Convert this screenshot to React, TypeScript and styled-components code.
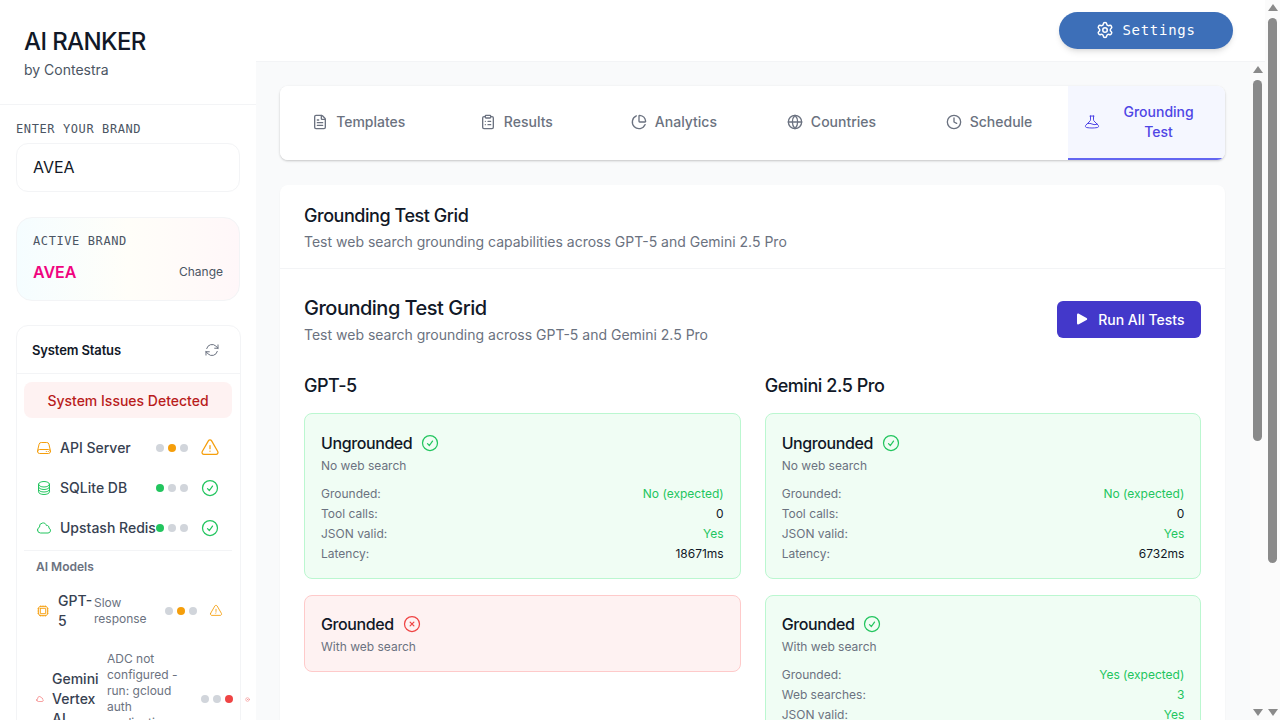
import React from "react";
import styled, { createGlobalStyle } from "styled-components";
import { ChartPie, ClipboardList, Clock, FileText, Globe, Settings } from "lucide-react";
import {
  HiOutlineArrowPath,
  HiOutlineBeaker,
  HiOutlineCheckCircle,
  HiOutlineCircleStack,
  HiOutlineCloud,
  HiOutlineCpuChip,
  HiOutlineExclamationTriangle,
  HiOutlineServer,
  HiOutlineXCircle,
  HiPlay,
} from "react-icons/hi2";

const GlobalStyle = createGlobalStyle`
  html, body {
    margin: 0;
    height: 100%;
    overflow: hidden;
    background: #fff;
    font-family: Inter, "Noto Sans", sans-serif;
    color: #111827;
  }
  * { box-sizing: border-box; }
`;

const mono = `"DejaVu Sans Mono", "Liberation Mono", monospace`;

const Shell = styled.div`
  display: flex;
  height: 720px;
  overflow: hidden;
`;

const Frame = styled.div`
  flex: 1;
  min-width: 0;
  display: flex;
`;

const Sidebar = styled.aside`
  width: 256px;
  flex-shrink: 0;
  overflow: hidden;
  background: #fff;
`;

const Brand = styled.div`
  height: 105px;
  padding: 26px 24px 0;
  border-bottom: 1px solid #f3f4f6;
`;

const Logo = styled.h1`
  margin: 0;
  font-size: 24px;
  line-height: 32px;
  font-weight: 500;
  letter-spacing: -0.025em;
  color: #111827;
`;

const ByLine = styled.p`
  margin: 0;
  font-size: 14px;
  line-height: 24px;
  color: #4b5563;
`;

const SideBody = styled.div`
  padding: 16px 16px 0;
`;

const MonoLabel = styled.label`
  display: block;
  font-family: ${mono};
  font-size: 12px;
  line-height: 16px;
  letter-spacing: 0.05em;
  color: #4b5563;
`;

const BrandInput = styled.div`
  margin-top: 6px;
  height: 49px;
  padding: 0 16px 1px;
  display: flex;
  align-items: center;
  font-size: 16px;
  color: #111827;
  background: #fff;
  border: 1px solid #f3f4f6;
  border-radius: 12px;
`;

const ActiveCard = styled.div`
  margin-top: 25px;
  height: 84px;
  padding: 15px 16px 0;
  border: 1px solid #f3f4f6;
  border-radius: 16px;
  background: linear-gradient(90deg, #f5fdff 0%, #fffef9 50%, #fff7f9 100%);
`;

const ActiveRow = styled.div`
  margin-top: 11px;
  display: flex;
  align-items: center;
  justify-content: space-between;
`;

const ActiveName = styled.span`
  font-size: 16px;
  line-height: 24px;
  font-weight: 600;
  color: #f0047f;
`;

const ChangeLink = styled.span`
  margin-bottom: 2px;
  font-size: 12px;
  color: #4b5563;
`;

const StatusCard = styled.section`
  margin-top: 24px;
  width: 225px;
  background: #fff;
  border: 1px solid #f3f4f6;
  border-radius: 12px;
`;

const StatusHead = styled.div`
  height: 48px;
  padding: 0 20px 0 15px;
  display: flex;
  align-items: center;
  justify-content: space-between;
  border-bottom: 1px solid #f3f4f6;
  font-size: 13px;
  font-weight: 600;
  letter-spacing: -0.01em;
  color: #111827;
  svg {
    width: 16px;
    height: 16px;
    color: #6b7280;
  }
`;

const StatusBody = styled.div`
  padding: 8px 8px 0 7px;
`;

const Alert = styled.div`
  height: 36px;
  display: flex;
  align-items: center;
  justify-content: center;
  border-radius: 8px;
  background: #fef2f2;
  color: #b91c1c;
  font-size: 14px;
  font-weight: 500;
`;

const Services = styled.div`
  margin-top: 10px;
  padding-bottom: 2px;
  border-bottom: 1px solid #f3f4f6;
`;

const ServiceRow = styled.div`
  height: 40px;
  padding: 0 12px;
  display: flex;
  align-items: center;
  justify-content: space-between;
`;

const RowLeft = styled.div<{ $width?: number }>`
  display: flex;
  align-items: center;
  gap: 8px;
  min-width: 0;
  flex-shrink: 0;
  ${(p) => (p.$width ? `width: ${p.$width}px;` : "")}
  font-size: 14px;
  line-height: 20px;
  font-weight: 500;
  color: #374151;
`;

const RowRight = styled.div`
  display: flex;
  align-items: center;
  gap: 12px;
  flex-shrink: 0;
`;

const Lights = styled.div`
  display: flex;
  gap: 4px;
`;

const Light = styled.span<{ $color?: string }>`
  width: 8px;
  height: 8px;
  border-radius: 50%;
  background: ${(p) => p.$color ?? "#d1d5db"};
`;

const Tone = styled.span<{ $color: string; $size: number }>`
  display: flex;
  flex-shrink: 0;
  color: ${(p) => p.$color};
  svg {
    width: ${(p) => p.$size}px;
    height: ${(p) => p.$size}px;
  }
`;

const ModelsTitle = styled.div`
  padding: 8px 12px 0;
  font-size: 12px;
  line-height: 16px;
  font-weight: 600;
  color: #6b7280;
`;

const ModelRow = styled.div<{ $top: number }>`
  margin-top: ${(p) => p.$top}px;
  padding: 0 12px;
  display: flex;
  align-items: center;
`;

const ModelName = styled.span<{ $width: number }>`
  width: ${(p) => p.$width}px;
  flex-shrink: 0;
  font-size: 14px;
  line-height: 20px;
  font-weight: 500;
  color: #374151;
`;

const ModelDetail = styled.span<{ $width: number }>`
  width: ${(p) => p.$width}px;
  flex-shrink: 0;
  font-size: 12px;
  line-height: 16px;
  font-weight: 400;
  color: #6b7280;
  margin-left: -5px;
`;

const Right = styled.div`
  flex: 1;
  min-width: 0;
  display: flex;
  flex-direction: column;
`;

const TopBar = styled.header`
  height: 61px;
  flex-shrink: 0;
  padding: 12px 32px 0 0;
  display: flex;
  justify-content: flex-end;
  align-items: flex-start;
  background: #fff;
`;

const SettingsButton = styled.button`
  width: 174px;
  height: 37px;
  padding: 0 0 2px;
  display: flex;
  align-items: center;
  justify-content: center;
  gap: 8px;
  border: 0;
  border-radius: 999px;
  background: #3d6fb8;
  color: #fff;
  font-family: ${mono};
  font-size: 14px;
  letter-spacing: 0.05em;
  box-shadow: 0 4px 6px -1px rgba(0, 0, 0, 0.1), 0 2px 4px -2px rgba(0, 0, 0, 0.1);
  svg {
    width: 18px;
    height: 18px;
  }
`;

const MainArea = styled.div`
  flex: 1;
  min-height: 0;
  display: flex;
  background: #f9fafb;
  border-top: 1px solid #f3f4f6;
`;

const Main = styled.main`
  flex: 1;
  min-width: 0;
  overflow: hidden;
  padding: 24px 24.67px 24px 24px;
`;

const Tabs = styled.nav`
  display: flex;
  background: #fff;
  border-radius: 8px;
  box-shadow: 0 1px 3px rgba(0, 0, 0, 0.12), 0 1px 2px rgba(0, 0, 0, 0.1);
  overflow: hidden;
`;

const Tab = styled.div<{ $active?: boolean }>`
  flex: 1 1 0;
  min-width: 0;
  padding: 16px;
  display: flex;
  align-items: center;
  justify-content: center;
  gap: 8px;
  font-size: 14px;
  line-height: 20px;
  font-weight: 500;
  text-align: center;
  color: ${(p) => (p.$active ? "#4f46e5" : "#6b7280")};
  background: ${(p) => (p.$active ? "#f5f7ff" : "#fff")};
  border-bottom: 2px solid ${(p) => (p.$active ? "#6366f1" : "transparent")};
  svg {
    width: 16px;
    height: 16px;
    flex-shrink: 0;
  }
`;

const Panel = styled.section`
  margin-top: 25px;
  background: #fff;
  border-radius: 8px;
  box-shadow: 0 1px 2px rgba(0, 0, 0, 0.05);
`;

const PanelHead = styled.div`
  padding: 19px 24px 16px;
  border-bottom: 1px solid #f3f4f6;
`;

const PanelTitle = styled.h2`
  margin: 0;
  font-size: 18px;
  line-height: 24px;
  font-weight: 500;
  letter-spacing: -0.025em;
  color: #111827;
`;

const Muted = styled.p<{ $top?: number }>`
  margin: ${(p) => p.$top ?? 4}px 0 0;
  font-size: 14px;
  line-height: 20px;
  color: #6b7280;
`;

const PanelBody = styled.div`
  padding: 24px;
`;

const GridHead = styled.div`
  display: flex;
  align-items: flex-start;
  justify-content: space-between;
`;

const GridTitle = styled.h3`
  margin: 1px 0 0;
  font-size: 20px;
  line-height: 28px;
  font-weight: 500;
  letter-spacing: -0.025em;
  color: #111827;
`;

const RunButton = styled.button`
  margin-top: 8px;
  width: 144px;
  height: 37px;
  padding: 0 0 1px;
  display: flex;
  align-items: center;
  justify-content: center;
  gap: 8px;
  border: 0;
  border-radius: 6px;
  background: #4338ca;
  color: #fff;
  font-family: inherit;
  font-size: 14px;
  font-weight: 500;
  svg {
    width: 16px;
    height: 16px;
  }
`;

const Columns = styled.div`
  margin-top: 26.9px;
  display: grid;
  grid-template-columns: 1fr 1fr;
  gap: 24px;
`;

const ColumnTitle = styled.h4`
  margin: 0 0 13.5px;
  font-size: 18px;
  line-height: 28px;
  font-weight: 500;
  letter-spacing: -0.025em;
  color: #111827;
`;

const Stack = styled.div`
  display: flex;
  flex-direction: column;
  gap: 16px;
`;

const ResultCard = styled.div<{ $failed?: boolean }>`
  padding: 16.2px 16px 15.5px;
  border-radius: 8px;
  border: 1px solid ${(p) => (p.$failed ? "#fecaca" : "#bbf7d0")};
  background: ${(p) => (p.$failed ? "#fef2f2" : "#f0fdf4")};
`;

const CardTitle = styled.div`
  display: flex;
  align-items: center;
  gap: 8px;
  font-size: 16px;
  line-height: 24px;
  font-weight: 500;
  letter-spacing: -0.025em;
  color: #111827;
`;

const CardNote = styled.div`
  font-size: 12px;
  line-height: 16px;
  margin-top: 3px;
  color: #6b7280;
`;

const Metrics = styled.div`
  margin: 10px 0 -1px;
`;

const MetricRow = styled.div`
  display: flex;
  justify-content: space-between;
  font-size: 12px;
  line-height: 20px;
  color: #6b7280;
`;

const MetricValue = styled.span<{ $good?: boolean }>`
  color: ${(p) => (p.$good ? "#22c55e" : "#111827")};
`;

const ScrollTrack = styled.div`
  width: 15px;
  flex-shrink: 0;
  display: flex;
  flex-direction: column;
  align-items: center;
  background: #fbfbfb;
`;

const ScrollThumb = styled.div<{ $height: number }>`
  width: 9px;
  height: ${(p) => p.$height}px;
  margin-top: 7px;
  border-radius: 5px;
  background: #8a8a8a;
`;

const Spacer = styled.div`
  flex: 1;
`;

const ArrowUp = styled.div`
  margin-top: 4px;
  width: 0;
  height: 0;
  border-left: 5px solid transparent;
  border-right: 5px solid transparent;
  border-bottom: 7px solid #8a8a8a;
`;

const ArrowDown = styled.div`
  margin-bottom: 4px;
  width: 0;
  height: 0;
  border-left: 5px solid transparent;
  border-right: 5px solid transparent;
  border-top: 7px solid #8a8a8a;
`;

interface MetricItem {
  label: string;
  value: string;
  good?: boolean;
}

interface Result {
  title: string;
  note: string;
  failed?: boolean;
  metrics?: MetricItem[];
}

const tabs = [
  { label: "Templates", Icon: FileText },
  { label: "Results", Icon: ClipboardList },
  { label: "Analytics", Icon: ChartPie },
  { label: "Countries", Icon: Globe },
  { label: "Schedule", Icon: Clock },
  { label: "Grounding Test", Icon: HiOutlineBeaker, active: true },
];

const ungrounded = (latency: string): Result => ({
  title: "Ungrounded",
  note: "No web search",
  metrics: [
    { label: "Grounded:", value: "No (expected)", good: true },
    { label: "Tool calls:", value: "0" },
    { label: "JSON valid:", value: "Yes", good: true },
    { label: "Latency:", value: latency },
  ],
});

const columns: { name: string; results: Result[] }[] = [
  {
    name: "GPT-5",
    results: [
      ungrounded("18671ms"),
      { title: "Grounded", note: "With web search", failed: true },
    ],
  },
  {
    name: "Gemini 2.5 Pro",
    results: [
      ungrounded("6732ms"),
      {
        title: "Grounded",
        note: "With web search",
        metrics: [
          { label: "Grounded:", value: "Yes (expected)", good: true },
          { label: "Web searches:", value: "3", good: true },
          { label: "JSON valid:", value: "Yes", good: true },
        ],
      },
    ],
  },
];

const GREEN = "#22c55e";
const AMBER = "#f59e0b";
const RED = "#ef4444";

const services = [
  { name: "API Server", Icon: HiOutlineServer, color: AMBER, lit: 1 },
  { name: "SQLite DB", Icon: HiOutlineCircleStack, color: GREEN, lit: 0 },
  { name: "Upstash Redis", Icon: HiOutlineCloud, color: GREEN, lit: 0 },
];

function TrafficLights({ lit, color }: { lit: number; color: string }) {
  return (
    <Lights>
      {[0, 1, 2].map((i) => (
        <Light key={i} $color={i === lit ? color : undefined} />
      ))}
    </Lights>
  );
}

function ResultPanel({ result }: { result: Result }) {
  return (
    <ResultCard $failed={result.failed}>
      <CardTitle>
        {result.title}
        <Tone $color={result.failed ? RED : GREEN} $size={20}>
          {result.failed ? <HiOutlineXCircle /> : <HiOutlineCheckCircle />}
        </Tone>
      </CardTitle>
      <CardNote>{result.note}</CardNote>
      {result.metrics && (
        <Metrics>
          {result.metrics.map((m) => (
            <MetricRow key={m.label}>
              <span>{m.label}</span>
              <MetricValue $good={m.good}>{m.value}</MetricValue>
            </MetricRow>
          ))}
        </Metrics>
      )}
    </ResultCard>
  );
}

export default function App() {
  return (
    <Shell>
      <GlobalStyle />
      <Frame>
        <Sidebar>
          <Brand>
            <Logo>AI RANKER</Logo>
            <ByLine>by Contestra</ByLine>
          </Brand>
          <SideBody>
            <MonoLabel>ENTER YOUR BRAND</MonoLabel>
            <BrandInput>AVEA</BrandInput>
            <ActiveCard>
              <MonoLabel>ACTIVE BRAND</MonoLabel>
              <ActiveRow>
                <ActiveName>AVEA</ActiveName>
                <ChangeLink>Change</ChangeLink>
              </ActiveRow>
            </ActiveCard>
            <StatusCard>
              <StatusHead>
                System Status
                <HiOutlineArrowPath />
              </StatusHead>
              <StatusBody>
                <Alert>System Issues Detected</Alert>
                <Services>
                  {services.map(({ name, Icon, color, lit }) => (
                    <ServiceRow key={name}>
                      <RowLeft>
                        <Tone $color={color} $size={16}>
                          <Icon />
                        </Tone>
                        {name}
                      </RowLeft>
                      <RowRight>
                        <TrafficLights lit={lit} color={color} />
                        <Tone $color={color} $size={20}>
                          {lit === 1 ? <HiOutlineExclamationTriangle /> : <HiOutlineCheckCircle />}
                        </Tone>
                      </RowRight>
                    </ServiceRow>
                  ))}
                </Services>
                <ModelsTitle>AI Models</ModelsTitle>
                <ModelRow $top={16}>
                  <RowLeft $width={129}>
                    <Tone $color={AMBER} $size={14}>
                      <HiOutlineCpuChip />
                    </Tone>
                    <ModelName $width={33}>GPT-5</ModelName>
                    <ModelDetail $width={66}>Slow response</ModelDetail>
                  </RowLeft>
                  <RowRight>
                    <TrafficLights lit={1} color={AMBER} />
                    <Tone $color={AMBER} $size={14}>
                      <HiOutlineExclamationTriangle />
                    </Tone>
                  </RowRight>
                </ModelRow>
                <ModelRow $top={20}>
                  <RowLeft $width={165}>
                    <Tone $color={RED} $size={8}>
                      <HiOutlineCloud />
                    </Tone>
                    <ModelName $width={52}>Gemini Vertex AI</ModelName>
                    <ModelDetail $width={88}>
                      ADC not configured - run: gcloud auth application-default login
                    </ModelDetail>
                  </RowLeft>
                  <RowRight>
                    <TrafficLights lit={2} color={RED} />
                    <Tone $color={RED} $size={5}>
                      <HiOutlineXCircle />
                    </Tone>
                  </RowRight>
                </ModelRow>
              </StatusBody>
            </StatusCard>
          </SideBody>
        </Sidebar>
        <Right>
          <TopBar>
            <SettingsButton>
              <Settings />
              Settings
            </SettingsButton>
          </TopBar>
          <MainArea>
            <Main>
              <Tabs>
                {tabs.map(({ label, Icon, active }) => (
                  <Tab key={label} $active={active}>
                    <Icon />
                    <span>{label}</span>
                  </Tab>
                ))}
              </Tabs>
              <Panel>
                <PanelHead>
                  <PanelTitle>Grounding Test Grid</PanelTitle>
                  <Muted>Test web search grounding capabilities across GPT-5 and Gemini 2.5 Pro</Muted>
                </PanelHead>
                <PanelBody>
                  <GridHead>
                    <div>
                      <GridTitle>Grounding Test Grid</GridTitle>
                      <Muted $top={3}>Test web search grounding across GPT-5 and Gemini 2.5 Pro</Muted>
                    </div>
                    <RunButton>
                      <HiPlay />
                      Run All Tests
                    </RunButton>
                  </GridHead>
                  <Columns>
                    {columns.map((col) => (
                      <div key={col.name}>
                        <ColumnTitle>{col.name}</ColumnTitle>
                        <Stack>
                          {col.results.map((r) => (
                            <ResultPanel key={r.title} result={r} />
                          ))}
                        </Stack>
                      </div>
                    ))}
                  </Columns>
                </PanelBody>
              </Panel>
            </Main>
            <ScrollTrack>
              <ArrowUp />
              <ScrollThumb $height={361} />
              <Spacer />
              <ArrowDown />
            </ScrollTrack>
          </MainArea>
        </Right>
      </Frame>
      <ScrollTrack>
        <ArrowUp />
        <ScrollThumb $height={545} />
        <Spacer />
        <ArrowDown />
      </ScrollTrack>
    </Shell>
  );
}
